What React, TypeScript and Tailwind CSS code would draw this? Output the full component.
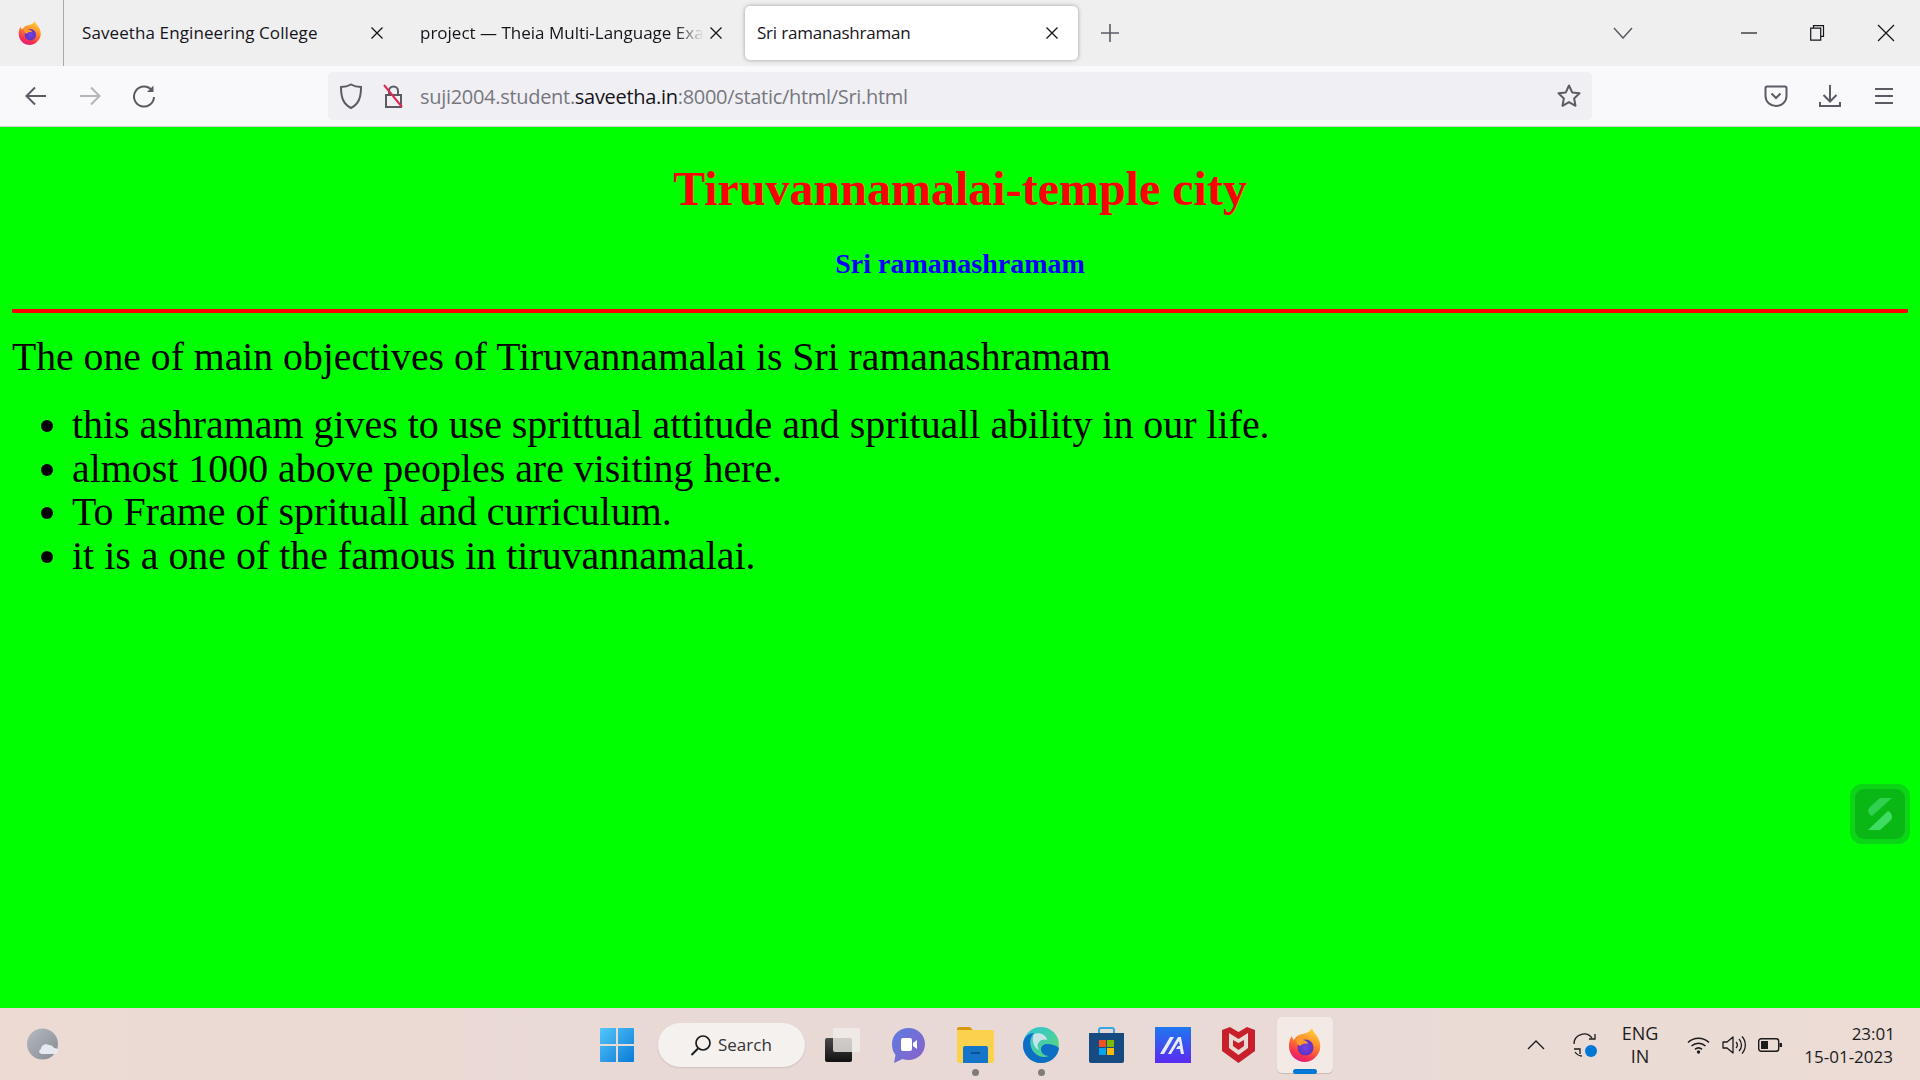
import React from "react";

const ui = "font-['Open_Sans',sans-serif]";
const stroke = "#5b5b66";

function Firefox({ id, size }: { id: string; size: number }) {
  return (
    <svg width={size} height={size} viewBox="0 0 34 34">
      <defs>
        <linearGradient id={id + "a"} x1="0.7" y1="0" x2="0.3" y2="1">
          <stop offset="0" stopColor="#ffd43a" />
          <stop offset="0.4" stopColor="#ff8a2b" />
          <stop offset="0.8" stopColor="#f5304f" />
          <stop offset="1" stopColor="#e31587" />
        </linearGradient>
        <radialGradient id={id + "b"} cx="0.5" cy="0.5" r="0.6">
          <stop offset="0" stopColor="#7542e5" />
          <stop offset="1" stopColor="#5b2fb8" />
        </radialGradient>
      </defs>
      <path d="M24 0c1 4 4 6 6 10 3 5 3 12 0 16-3 5-8 8-13 8C8 34 1 27 1 18c0-4 1-8 3-10 0 2 1 3 2 4 2-4 6-6 9-6 3-1 7-2 9-6z" fill={"url(#" + id + "a)"} />
      <circle cx="17.5" cy="19.5" r="8" fill={"url(#" + id + "b)"} />
      <path d="M8 12c3-3 8-4 11-2-2 0-4 1-5 2 3 0 6 2 6 4-3-1-6 0-8 2-2-1-4-3-4-6z" fill="#ff9a2e" />
    </svg>
  );
}

function Close({ size = 16, color = "#15141a" }: { size?: number; color?: string }) {
  return (
    <svg width={size} height={size} viewBox="0 0 16 16" className="shrink-0">
      <path d="M2.5 2.5l11 11M13.5 2.5l-11 11" stroke={color} strokeWidth="1.3" fill="none" />
    </svg>
  );
}

function Tab({ title, className, titleClass }: { title: string; className: string; titleClass?: string }) {
  return (
    <div className={"flex items-center shrink-0 " + className}>
      <div className={"flex-1 min-w-0 whitespace-nowrap overflow-hidden text-[17px] text-[#15141a] " + (titleClass ?? "")}>{title}</div>
      <Close />
    </div>
  );
}

function TabStrip() {
  return (
    <div className={"h-[66px] bg-[#efeff0] flex items-center shrink-0 " + ui}>
      <div className="w-[64px] h-full border-r border-[#a9a9ad] flex items-center pl-[18px] shrink-0">
        <Firefox id="ffs" size={24} />
      </div>
      <Tab title="Saveetha Engineering College" className="w-[338px] pl-[18px] pr-[17px]" titleClass="tracking-[0.1px]" />
      <Tab
        title="project — Theia Multi-Language Example"
        className="w-[337px] pl-[18px] pr-[15px]"
        titleClass="[mask-image:linear-gradient(to_right,black_90%,transparent_100%)] mr-[4px]"
      />
      <Tab
        title="Sri ramanashraman"
        className="ml-[6px] w-[333px] h-[54px] bg-white rounded-[5px] shadow-[0_0_4px_rgba(0,0,0,0.35)] pl-[12px] pr-[18px]"
        titleClass="tracking-[-0.2px]"
      />
      <svg width="20" height="20" viewBox="0 0 20 20" className="ml-[22px] shrink-0">
        <path d="M10 1v18M1 10h18" stroke={stroke} strokeWidth="1.6" fill="none" />
      </svg>
      <svg width="20" height="12" viewBox="0 0 20 12" className="ml-[493px] shrink-0">
        <path d="M1 1l9 10 9-10" stroke={stroke} strokeWidth="1.5" fill="none" />
      </svg>
      <svg width="16" height="2" viewBox="0 0 16 2" className="ml-[108px] shrink-0">
        <path d="M0 1h16" stroke="#15141a" strokeWidth="1.2" />
      </svg>
      <svg width="15" height="16" viewBox="0 0 15 16" className="ml-[53px] shrink-0">
        <path d="M3.5 3V.7h10v10.6H11M.7 3.2h10v12H.7z" stroke="#15141a" strokeWidth="1.2" fill="none" />
      </svg>
      <svg width="18" height="18" viewBox="0 0 18 18" className="ml-[52px] shrink-0">
        <path d="M1 1l16 16M17 1L1 17" stroke="#15141a" strokeWidth="1.2" fill="none" />
      </svg>
    </div>
  );
}

function Toolbar() {
  return (
    <div className="h-[61px] bg-[#f9f9fb] border-b border-[#d0d0d4] flex items-center pl-[24px] shrink-0">
      <svg width="24" height="24" viewBox="0 0 24 24" className="shrink-0">
        <path d="M22 12H2.5M11 3.5L2.5 12l8.5 8.5" stroke={stroke} strokeWidth="2" fill="none" />
      </svg>
      <svg width="24" height="24" viewBox="0 0 24 24" className="ml-[30px] shrink-0">
        <path d="M2 12h19.5M13 3.5l8.5 8.5-8.5 8.5" stroke="#b4b4b9" strokeWidth="2" fill="none" />
      </svg>
      <svg width="24" height="24" viewBox="0 0 24 24" className="ml-[30px] shrink-0">
        <path d="M20 6.5A10 10 0 1 0 22 13" stroke={stroke} strokeWidth="2" fill="none" />
        <path d="M21.5 1.5v6.5h-6.5z" fill={stroke} />
      </svg>
      <div className={"ml-[172px] w-[1264px] h-[48px] bg-[#f0f0f4] rounded-[5px] flex items-center shrink-0 " + ui}>
        <svg width="24" height="26" viewBox="0 0 24 26" className="ml-[11px] shrink-0">
          <path d="M12 1.5c3 1.8 6 2.5 10 2.5 0 10-2 17-10 21C4 21 2 14 2 4c4 0 7-.7 10-2.5z" stroke={stroke} strokeWidth="2" fill="none" />
        </svg>
        <svg width="22" height="26" viewBox="0 0 22 26" className="ml-[19px] shrink-0">
          <path d="M4 12h15v12H4zM7 12V8a4.5 4.5 0 0 1 9 0v4" stroke={stroke} strokeWidth="2" fill="none" />
          <path d="M2 2l18 22" stroke="#e22850" strokeWidth="2" />
        </svg>
        <div className="ml-[16px] mt-[2px] text-[20px] text-[#77777e] whitespace-nowrap tracking-[-0.3px]">
          suji2004.student.<span className="text-[#15141a]">saveetha.in</span>:8000/static/html/Sri.html
        </div>
        <svg width="26" height="26" viewBox="0 0 26 26" className="ml-auto mr-[10px] shrink-0">
          <path d="M13 2.5l3.2 6.9 7.3.9-5.4 5.1 1.4 7.4-6.5-3.7-6.5 3.7 1.4-7.4-5.4-5.1 7.3-.9z" stroke={stroke} strokeWidth="2" strokeLinejoin="round" fill="none" />
        </svg>
      </div>
      <svg width="24" height="24" viewBox="0 0 24 24" className="ml-[172px] shrink-0">
        <path d="M3 2.5h18c1 0 1.500.6 1.500 1.500v8c0 6-5 10-10.500 10S1.500 18 1.500 12V4C1.500 3.100 2 2.500 3 2.500z" stroke={stroke} strokeWidth="2" fill="none" />
        <path d="M7.500 9.500l4.500 4.500 4.500-4.500" stroke={stroke} strokeWidth="2" fill="none" />
      </svg>
      <svg width="24" height="24" viewBox="0 0 24 24" className="ml-[30px] shrink-0">
        <path d="M12 1v16M5.500 11l6.500 6.500 6.500-6.500M2 18v4h20v-4" stroke={stroke} strokeWidth="2" fill="none" />
      </svg>
      <svg width="24" height="24" viewBox="0 0 24 24" className="ml-[30px] shrink-0">
        <path d="M3 5h18M3 12h18M3 19h18" stroke={stroke} strokeWidth="2.2" fill="none" />
      </svg>
    </div>
  );
}

function Page() {
  return (
    <div className="relative flex-1 min-h-0 bg-[#00ff00] px-[12px] font-['Liberation_Serif',serif] overflow-hidden">
      <h1 className="pt-[34px] text-center font-bold text-[48px] leading-[55px] text-[#ff0000]">Tiruvannamalai-temple city</h1>
      <h2 className="mt-[32px] text-center font-bold text-[28px] leading-[32px] text-[#0000ff]">Sri ramanashramam</h2>
      <div className="mt-[29px] h-[4px] bg-[#ff0000] rounded-[1px]" />
      <p className="mt-[22px] text-[39.7px] leading-[44px] text-black">The one of main objectives of Tiruvannamalai is Sri ramanashramam</p>
      <ul className="mt-[24px] ml-[60px] list-disc text-[39.9px] leading-[43.6px] text-black">
        <li>this ashramam gives to use sprittual attitude and sprituall ability in our life.</li>
        <li>almost 1000 above peoples are visiting here.</li>
        <li>To Frame of sprituall and curriculum.</li>
        <li>it is a one of the famous in tiruvannamalai.</li>
      </ul>
      <div className="absolute right-[10px] top-[657px] w-[60px] h-[60px] rounded-[12px] bg-[#0ad616] flex items-center justify-center">
        <div className="w-[50px] h-[50px] rounded-[9px] bg-[#0ab815] flex items-center justify-center">
          <svg width="26" height="34" viewBox="0 0 26 34">
            <path d="M13 1h12L5 19C1 17 0 13 3 10z" fill="#2fd14f" />
            <path d="M21 14c4 2 5 6 3 9L13 33H1z" fill="#3fdc62" />
          </svg>
        </div>
      </div>
    </div>
  );
}

function Dot({ className }: { className: string }) {
  return <span className={"absolute rounded-full " + className} />;
}

function Taskbar() {
  return (
    <div className={"relative h-[72px] pt-[2px] shrink-0 flex items-center bg-[linear-gradient(90deg,#ecdad3,#e8d9d6_50%,#ecdcd5)] text-[#1b1b1b] " + ui}>
      <svg width="34" height="34" viewBox="0 0 34 34" className="ml-[27px] shrink-0">
        <defs>
          <linearGradient id="moon" x1="0" y1="0" x2="1" y2="1">
            <stop offset="0" stopColor="#b5bac0" />
            <stop offset="1" stopColor="#858b93" />
          </linearGradient>
        </defs>
        <circle cx="15.500" cy="16" r="15.500" fill="url(#moon)" />
        <path d="M15 26c-3 0-4-4-1-5 0-4 5-6 8-4 2 0 4 1 5 3 3 0 4 1 4 3s-1 3-3 3z" fill="#e6eaee" />
      </svg>
      <svg width="34" height="34" viewBox="0 0 34 34" className="ml-[539px] shrink-0">
        <defs>
          <linearGradient id="win" x1="0" y1="0" x2="1" y2="1">
            <stop offset="0" stopColor="#52c7fb" />
            <stop offset="1" stopColor="#0a7ad6" />
          </linearGradient>
        </defs>
        <path d="M0 1a1 1 0 0 1 1-1h15v16H0zM18 0h15a1 1 0 0 1 1 1v15H18zM0 18h16v16H1a1 1 0 0 1-1-1zM18 18h16v15a1 1 0 0 1-1 1H18z" fill="url(#win)" />
      </svg>
      <div className="ml-[24px] w-[147px] h-[44px] rounded-full bg-[#f5f1ef] shadow-[0_1px_2px_rgba(0,0,0,0.12)] flex items-center pl-[32px] shrink-0">
        <svg width="22" height="22" viewBox="0 0 22 22" className="shrink-0">
          <circle cx="13" cy="9" r="7" stroke="#1b1b1b" strokeWidth="1.700" fill="none" />
          <path d="M8 14.500L1.500 21" stroke="#1b1b1b" strokeWidth="2" />
        </svg>
        <span className="ml-[6px] text-[17px] text-[#333]">Search</span>
      </div>
      <div className="relative ml-[20px] w-[35px] h-[34px] shrink-0">
        <div className="absolute left-0 bottom-0 w-[27px] h-[24px] rounded-[2px] bg-[linear-gradient(#4a4a4a,#111)]" />
        <div className="absolute right-0 top-0 w-[27px] h-[24px] rounded-[2px] bg-[#f0ecea]/80" />
      </div>
      <svg width="33" height="35" viewBox="0 0 33 35" className="ml-[32px] shrink-0">
        <defs>
          <linearGradient id="chat" x1="0" y1="0" x2="1" y2="1">
            <stop offset="0" stopColor="#5d7be0" />
            <stop offset="1" stopColor="#8a62c9" />
          </linearGradient>
        </defs>
        <path d="M16.500 0C26 0 33 7 33 16s-7 16-16.500 16c-2 0-4-.3-6-1L2 35l1.500-8C1 24 0 20 0 16 0 7 7 0 16.500 0z" fill="url(#chat)" />
        <rect x="9" y="10" width="11" height="13" rx="2" fill="#fff" />
        <path d="M21 15l4-3v9l-4-3z" fill="#fff" />
      </svg>
      <div className="relative ml-[32px] shrink-0">
        <svg width="37" height="36" viewBox="0 0 37 36" className="block">
          <path d="M0 2a2 2 0 0 1 2-2h11l3 3h-16z" fill="#d69a10" />
          <path d="M0 3h35a2 2 0 0 1 2 2v29a2 2 0 0 1-2 2H2a2 2 0 0 1-2-2z" fill="#fbd24d" />
          <path d="M6 21a2 2 0 0 1 2-2h21a2 2 0 0 1 2 2v15H6z" fill="#1576c9" />
          <path d="M14 26h9" stroke="#0c4f93" strokeWidth="2" />
        </svg>
        <Dot className="left-[15px] top-[42px] w-[7px] h-[7px] bg-[#807c7a]" />
      </div>
      <div className="relative ml-[29px] shrink-0">
        <svg width="36" height="36" viewBox="0 0 36 36" className="block">
          <defs>
            <linearGradient id="edge1" x1="0" y1="0" x2="1" y2="1">
              <stop offset="0" stopColor="#2fc3e0" />
              <stop offset="1" stopColor="#5ed96b" />
            </linearGradient>
          </defs>
          <circle cx="18" cy="18" r="18" fill="url(#edge1)" />
          <path d="M36 21c-1 9-9 15-18 15C8 36 0 28 0 18 0 10 6 6 11 6c-3 3-5 8-3 14 2 7 10 12 18 9-5 0-8-3-8-7 0-3 3-5 6-5 5 0 8 1 12 4z" fill="#0d6ec4" />
          <path d="M11 7c5-2 12 0 13 6-2-1-6-1-8 2-2 2-2 5 0 8-5-2-8-10-5-16z" fill="#d7e6ec" opacity="0.9" />
        </svg>
        <Dot className="left-[15px] top-[42px] w-[7px] h-[7px] bg-[#807c7a]" />
      </div>
      <svg width="35" height="36" viewBox="0 0 35 36" className="ml-[30px] shrink-0">
        <path d="M10 6V3a2 2 0 0 1 2-2h11a2 2 0 0 1 2 2v3" stroke="#38a6e0" strokeWidth="2" fill="none" />
        <path d="M0 6h35v28a2 2 0 0 1-2 2H2a2 2 0 0 1-2-2z" fill="#154b80" />
        <rect x="10" y="13" width="7" height="7" fill="#f25022" />
        <rect x="18" y="13" width="7" height="7" fill="#7fba00" />
        <rect x="10" y="21" width="7" height="7" fill="#00a4ef" />
        <rect x="18" y="21" width="7" height="7" fill="#ffb900" />
      </svg>
      <svg width="36" height="36" viewBox="0 0 36 36" className="ml-[31px] shrink-0">
        <defs>
          <linearGradient id="ma" x1="0.5" y1="0" x2="0.5" y2="1">
            <stop offset="0" stopColor="#1e78f0" />
            <stop offset="1" stopColor="#5a2bf0" />
          </linearGradient>
        </defs>
        <rect width="36" height="36" fill="url(#ma)" />
        <path d="M5 27L15 10h4L9 27zM13 27L23 10h3l3 17h-3l-1-5h-4l2-3h2l-1-5-8 13z" fill="#e8ecff" />
      </svg>
      <svg width="33" height="36" viewBox="0 0 33 36" className="ml-[31px] shrink-0">
        <path d="M0 3l8-3 8.500 5L25 0l8 3v21L16.500 36 0 24z" fill="#c8202b" />
        <path d="M7 6l9.500 6L26 6v15l-9.500 7L7 21z" fill="#e9d9d3" />
        <path d="M11 13l5.500 3 5.500-3v6l-5.500 4-5.500-4z" fill="#c8202b" />
      </svg>
      <div className="relative ml-[22px] w-[56px] h-[56px] rounded-[5px] bg-[#f3eae6] shadow-[0_1px_1px_rgba(0,0,0,0.15)] flex items-center justify-center shrink-0">
        <Firefox id="fft" size={34} />
        <Dot className="left-[16px] bottom-[-1px] w-[24px] h-[5px] bg-[#0078d4]" />
      </div>
      <svg width="18" height="10" viewBox="0 0 18 10" className="ml-[194px] shrink-0">
        <path d="M1 9l8-8 8 8" stroke="#1b1b1b" strokeWidth="1.300" fill="none" />
      </svg>
      <div className="relative ml-[28px] w-[23px] h-[24px] shrink-0">
        <svg width="23" height="24" viewBox="0 0 23 24" className="block">
          <path d="M1 11a10 10 0 0 1 18-6M22 13M2 19a9 9 0 0 0 7 4" stroke="#1b1b1b" strokeWidth="1.300" fill="none" />
          <path d="M22 1v5h-6M1 16h6v5" stroke="#1b1b1b" strokeWidth="1.300" fill="none" />
        </svg>
        <Dot className="right-[-1px] bottom-[0px] w-[12px] h-[12px] bg-[#0078d4]" />
      </div>
      <div className="ml-[21px] w-[46px] text-center text-[18px] leading-[23px] shrink-0">
        <div>ENG</div>
        <div>IN</div>
      </div>
      <svg width="23" height="18" viewBox="0 0 23 18" className="ml-[24px] shrink-0">
        <path d="M1 6.500a15 15 0 0 1 21 0M4.500 10a10 10 0 0 1 14 0M8 13.300a5.500 5.500 0 0 1 7 0" stroke="#1b1b1b" strokeWidth="1.500" fill="none" />
        <circle cx="11.500" cy="16" r="1.700" fill="#1b1b1b" />
      </svg>
      <svg width="24" height="20" viewBox="0 0 24 20" className="ml-[12px] shrink-0">
        <path d="M1 7h4l6-5v16l-6-5H1z" stroke="#1b1b1b" strokeWidth="1.300" strokeLinejoin="round" fill="none" />
        <path d="M14 7a4 4 0 0 1 0 6M17 4a8.500 8.500 0 0 1 0 12M20 1.500a12.500 12.500 0 0 1 0 17" stroke="#1b1b1b" strokeWidth="1.300" fill="none" />
      </svg>
      <svg width="24" height="14" viewBox="0 0 24 14" className="ml-[12px] shrink-0">
        <rect x="0.700" y="0.700" width="20" height="12.600" rx="2.500" stroke="#1b1b1b" strokeWidth="1.400" fill="none" />
        <rect x="3" y="3" width="7" height="8" fill="#1b1b1b" />
        <rect x="21.500" y="5" width="2.500" height="4" fill="#1b1b1b" />
      </svg>
      <div className="ml-auto mr-[27px] text-right text-[17px] leading-[23px] whitespace-nowrap shrink-0">
        <div className="mr-[-2px]">23:01</div>
        <div>15-01-2023</div>
      </div>
    </div>
  );
}

export default function App() {
  return (
    <div className="w-[1920px] h-[1080px] flex flex-col overflow-hidden">
      <TabStrip />
      <Toolbar />
      <Page />
      <Taskbar />
    </div>
  );
}
